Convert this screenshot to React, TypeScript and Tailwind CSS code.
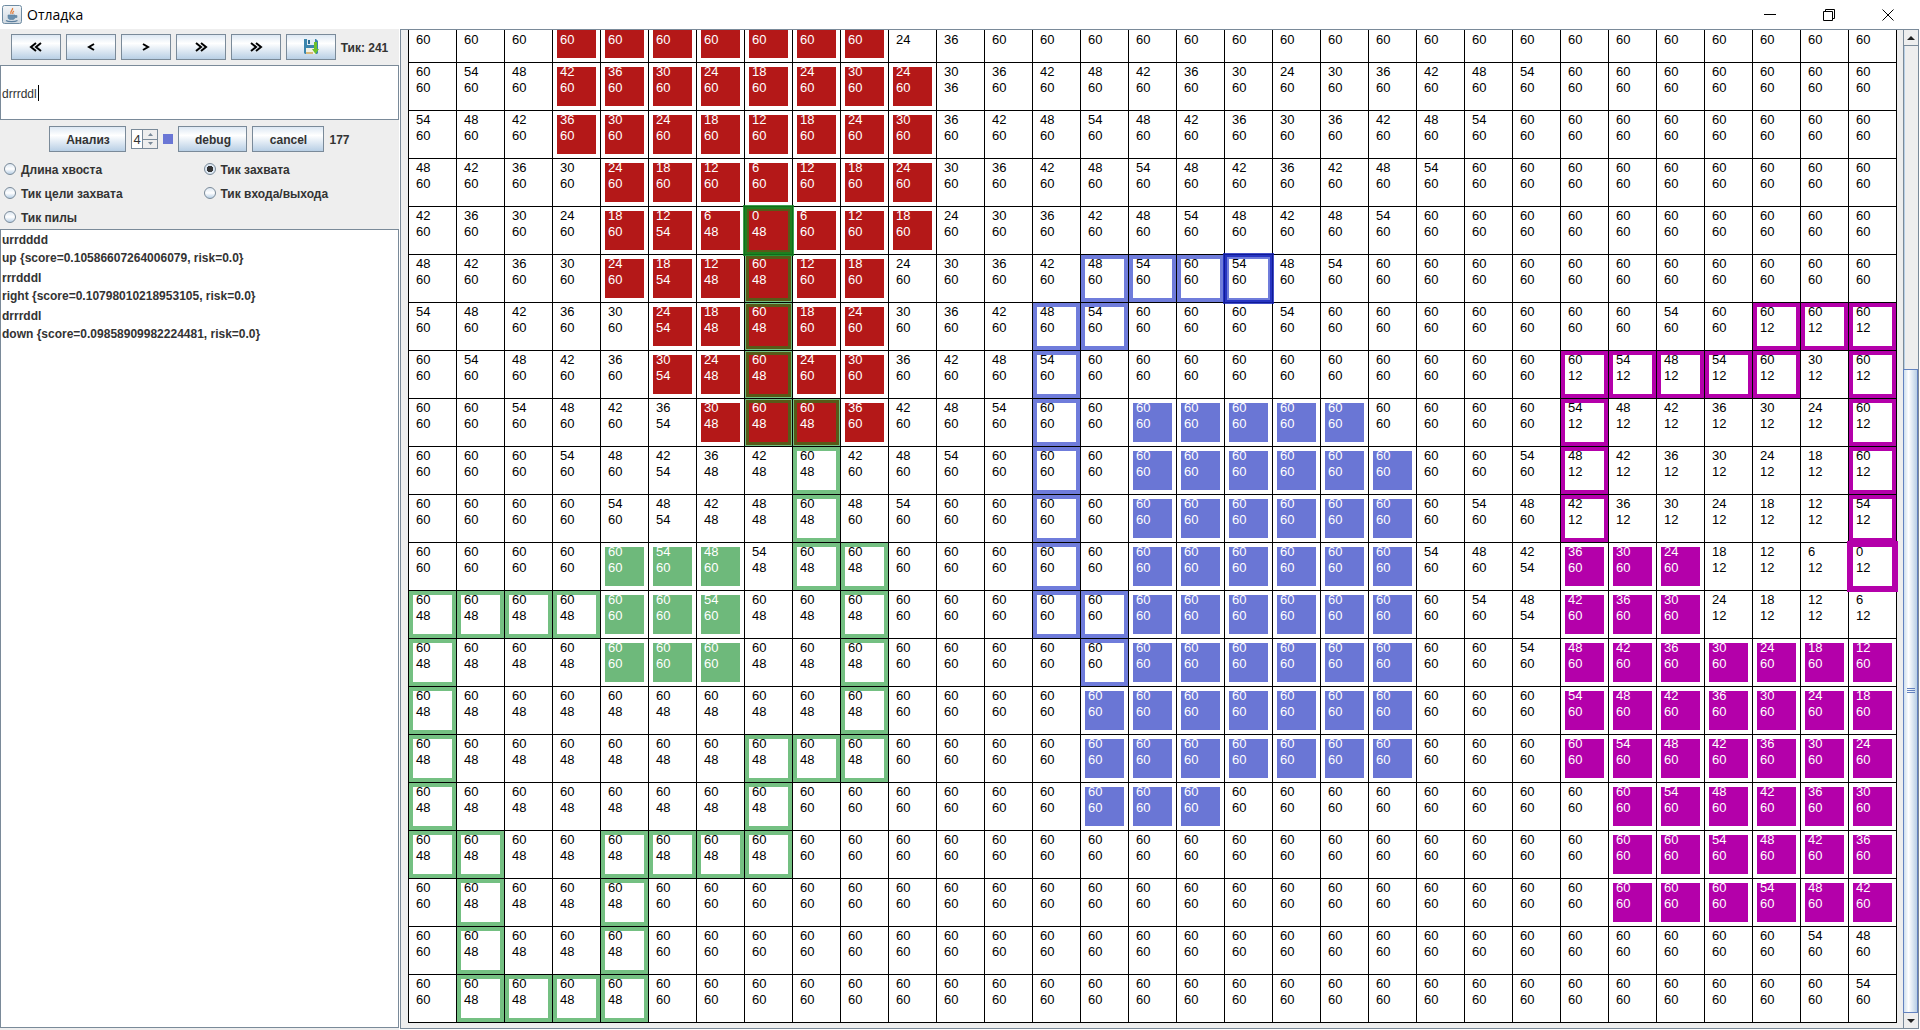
import React, { useState } from "react";

type Row = { top: string; bottom: string; kinds: string };

/* "60*4 54" stands for four cells of 60 followed by one cell of 54.
   Kinds: r g b m = captured, G B M = trail, X = trail over captured, H I J = heads. */
const ROWS: Row[] = [
  { top: "_*31", bottom: "60*10 24 36 60*19", kinds: "...rrrrrrr....................." },
  { top: "60 54 48 42 36 30 24 18 24 30 24 30 36 42 48 42 36 30 24 30 36 42 48 54 60*7", bottom: "60*11 36 60*19", kinds: "...rrrrrrrr...................." },
  { top: "54 48 42 36 30 24 18 12 18 24 30 36 42 48 54 48 42 36 30 36 42 48 54 60*8", bottom: "60*31", kinds: "...rrrrrrrr...................." },
  { top: "48 42 36 30 24 18 12 6 12 18 24 30 36 42 48 54 48 42 36 42 48 54 60*9", bottom: "60*31", kinds: "....rrrrrrr...................." },
  { top: "42 36 30 24 18 12 6 0 6 12 18 24 30 36 42 48 54 48 42 48 54 60*10", bottom: "60*5 54 48 48 60*23", kinds: "....rrrHrrr...................." },
  { top: "48 42 36 30 24 18 12 60 12 18 24 30 36 42 48 54 60 54 48 54 60*11", bottom: "60*5 54 48 48 60*23", kinds: "....rrrXrr....BBBI............." },
  { top: "54 48 42 36 30 24 18 60 18 24 30 36 42 48 54 60*3 54 60*7 54 60*4", bottom: "60*5 54 48 48 60*20 12*3", kinds: ".....rrXrr...BB.............MMM" },
  { top: "60 54 48 42 36 30 24 60 24 30 36 42 48 54 60*11 54 48 54 60 30 60", bottom: "60*5 54 48 48 60*16 12*7", kinds: ".....rrXrr...B..........MMMMM.M" },
  { top: "60 60 54 48 42 36 30 60 60 36 42 48 54 60*11 54 48 42 36 30 24 60", bottom: "60*5 54 48*3 60*15 12*7", kinds: "......rXXr...B.bbbbb....M.....M" },
  { top: "60*3 54 48 42 36 42 60 42 48 54 60*11 54 48 42 36 30 24 18 60", bottom: "60*5 54 48*3 60*15 12*7", kinds: "........G....B.bbbbbb...M.....M" },
  { top: "60*4 54 48 42 48 60 48 54 60*11 54 48 42 36 30 24 18 12 54", bottom: "60*5 54 48*3 60*15 12*7", kinds: "........G....B.bbbbbb...M.....M" },
  { top: "60*5 54 48 54 60*13 54 48 42 36 30 24 18 12 6 0", bottom: "60*7 48*3 60*13 54 60*3 12*4", kinds: "....ggg.GG...B.bbbbbb...mmm...J" },
  { top: "60*6 54 60*15 54 48 42 36 30 24 18 12 6", bottom: "48*4 60*3 48*3 60*13 54 60*3 12*4", kinds: "GGGGggg..G...BBbbbbbb...mmm...." },
  { top: "60*23 54 48 42 36 30 24 18 12", bottom: "48*4 60*3 48*3 60*21", kinds: "G...ggg..G....Bbbbbbb...mmmmmmm" },
  { top: "60*24 54 48 42 36 30 24 18", bottom: "48*10 60*21", kinds: "G........G....bbbbbbb...mmmmmmm" },
  { top: "60*25 54 48 42 36 30 24", bottom: "48*10 60*21", kinds: "G......GGG....bbbbbbb...mmmmmmm" },
  { top: "60*26 54 48 42 36 30", bottom: "48*8 60*23", kinds: "G......G......bbb........mmmmmm" },
  { top: "60*27 54 48 42 36", bottom: "48*8 60*23", kinds: "GG..GGGG.................mmmmmm" },
  { top: "60*28 54 48 42", bottom: "60 48*4 60*26", kinds: ".G..G....................mmmmmm" },
  { top: "60*29 54 48", bottom: "60 48*4 60*26", kinds: ".G..G.........................." },
  { top: "60*30 54", bottom: "60 48*4 60*26", kinds: ".GGGG.........................." },
];

function expand(line: string): string[] {
  return line.split(" ").flatMap((token) => {
    const [value, count] = token.split("*");
    return Array.from({ length: count ? Number(count) : 1 }, () => (value === "_" ? "\u00a0" : value));
  });
}

const FILLS: Record<string, string> = {
  r: "border-white bg-[#b41818] text-white",
  g: "border-white bg-[#6eb97b] text-white",
  b: "border-white bg-[#6a76d5] text-white",
  m: "border-white bg-[#b400aa] text-white",
  G: "border-[#74c082] bg-white text-black",
  B: "border-[#6f7cdb] bg-white text-black",
  M: "border-[#b400aa] bg-white text-black",
  X: "border-[#575a18] bg-[#b41818] text-white outline outline-1 -outline-offset-1 outline-[#74c082]",
  H: "border-[#575a18] bg-[#b41818] text-white",
  I: "border-[#6f7cdb] bg-white text-black",
  J: "border-[#b400aa] bg-white text-black",
  ".": "border-white bg-white text-black",
};

const HEADS: Record<string, string> = {
  H: "border-4 border-[#118a22]/80",
  I: "border-4 border-[#1422bb]/80",
  J: "border-[6px] border-[#b400aa]",
};

function Cell({ top, bottom, kind }: { top: string; bottom: string; kind: string }) {
  return (
    <td className="relative h-12 w-12 border-t border-l border-black p-0 align-top">
      <div className={"h-[47px] w-[47px] border-4 " + FILLS[kind]}>
        {HEADS[kind] && <div className={"absolute -inset-x-0.5 -inset-y-0.5 z-10 " + HEADS[kind]} />}
        <div className="relative z-20 -mt-1 pl-[3px] pt-px">
          <div>{top}</div>
          <div>{bottom}</div>
        </div>
      </div>
    </td>
  );
}

function Board() {
  return (
    <table className="shrink-0 border-separate border-spacing-0 border-r border-b border-black font-['Liberation_Sans',Arial,sans-serif] text-[13px] leading-4">
      <tbody>
        {ROWS.map((row, y) => {
          const top = expand(row.top);
          const bottom = expand(row.bottom);
          return (
            <tr key={y}>
              {row.kinds.split("").map((kind, x) => (
                <Cell key={x} top={top[x]} bottom={bottom[x]} kind={kind} />
              ))}
            </tr>
          );
        })}
      </tbody>
    </table>
  );
}

function MetalButton({ children, className = "", label }: { children: React.ReactNode; className?: string; label?: string }) {
  return (
    <button
      type="button"
      aria-label={label}
      className={
        "flex h-[26px] items-center justify-center border border-[#7a8a99] bg-linear-to-b from-[#dde8f3] via-white via-35% to-[#b8cfe5] font-bold " +
        className
      }
    >
      {children}
    </button>
  );
}

function Chevron({ d }: { d: string }) {
  return (
    <svg width="14" height="10" viewBox="0 0 14 10" fill="none" stroke="#000" strokeWidth="2" aria-hidden="true">
      <path d={d} />
    </svg>
  );
}

function SaveIcon() {
  return (
    <svg width="16" height="16" viewBox="0 0 16 16" aria-hidden="true">
      <path d="M1 0h12l2 2v12l-1 1H2l-1-1z" fill="#3c86ad" />
      <path d="M4 0h8v6H4z" fill="#e4eef5" />
      <path d="M5 1h2v4H5z" fill="#2d6f96" />
      <path d="M3 9h10v6H3z" fill="#f4f1e4" />
      <path d="M3 13h7v2H3z" fill="#d9b878" />
      <path d="M11 3h3v7h2l-3.500 5L9 10h2z" fill="#6cc22c" />
    </svg>
  );
}

function JavaIcon() {
  return (
    <svg width="20" height="20" viewBox="0 0 20 20" aria-hidden="true">
      <defs>
        <linearGradient id="cup" x1="0" y1="0" x2="0" y2="1">
          <stop offset="0" stopColor="#f4f6f8" />
          <stop offset="1" stopColor="#cfd8e0" />
        </linearGradient>
      </defs>
      <rect x="0.5" y="0.5" width="19" height="18" rx="2" fill="url(#cup)" stroke="#6f8ca3" />
      <path d="M10.500 3c1 2-3 3-1.500 6M12 6c-2 1-1.500 1.500-1 3" fill="none" stroke="#e07b39" strokeWidth="1.300" />
      <path d="M6 10h7v2c0 2-1 2.500-3.500 2.500S6 14 6 12zM13 10.500h2v2h-2" fill="#6a8fae" stroke="#5b7f9e" strokeWidth="0.600" />
      <path d="M4 15.500c2 1.500 9 1.500 11.500 0" fill="none" stroke="#5b7f9e" strokeWidth="1.200" />
    </svg>
  );
}

const MODES = ["Длина хвоста", "Тик захвата", "Тик цели захвата", "Тик входа/выхода", "Тик пилы"];

const RESULTS = [
  ["urrdddd", "up {score=0.10586607264006079, risk=0.0}"],
  ["rrrdddl", "right {score=0.10798010218953105, risk=0.0}"],
  ["drrrddl", "down {score=0.09858909982224481, risk=0.0}"],
];

function Sidebar() {
  const [mode, setMode] = useState("Тик захвата");
  const [path, setPath] = useState("drrrddl");
  const [player, setPlayer] = useState(4);
  return (
    <aside className="flex w-[399px] shrink-0 flex-col bg-[#eeeeee] text-xs font-bold text-[#333333]">
      <div className="flex h-9 items-center justify-center gap-[5px]">
        <MetalButton className="w-[50px]" label="В начало"><Chevron d="M7 1L2 5l5 4M12 1L7 5l5 4" /></MetalButton>
        <MetalButton className="w-[50px]" label="Назад"><Chevron d="M10 2L5 5l5 3" /></MetalButton>
        <MetalButton className="w-[50px]" label="Вперёд"><Chevron d="M4 2l5 3-5 3" /></MetalButton>
        <MetalButton className="w-[50px]" label="Быстро вперёд"><Chevron d="M2 1l5 4-5 4M7 1l5 4-5 4" /></MetalButton>
        <MetalButton className="w-[50px]" label="В конец"><Chevron d="M2 1l5 4-5 4M7 1l5 4-5 4" /></MetalButton>
        <MetalButton className="w-[50px]" label="Сохранить"><SaveIcon /></MetalButton>
        <span className="pt-0.5">Тик: 241</span>
      </div>

      <div className="relative h-14">
        <input
          aria-label="Путь"
          value={path}
          onChange={(e) => setPath(e.target.value)}
          className="h-[55px] w-full border border-[#7a8a99] bg-white px-px pt-0.5 font-normal outline-none"
        />
        <span className="absolute top-5 left-[38px] h-4 w-px bg-black" />
      </div>

      <div className="flex h-9 items-center justify-center gap-[5px]">
        <MetalButton className="w-[77px] pt-0.5">Анализ</MetalButton>
        <div className="flex h-5 border border-[#7a8a99] bg-white font-normal">
          <input
            aria-label="Игрок"
            inputMode="numeric"
            value={player}
            onChange={(e) => setPlayer(Number(e.target.value) || 0)}
            className="w-2.5 pt-0.5 pl-px text-[13px] text-[#333333] outline-none"
          />
          <div className="flex w-[15px] flex-col divide-y divide-[#7a8a99] border-l border-[#7a8a99] bg-[#eeeeee]">
            <button type="button" aria-label="Больше" onClick={() => setPlayer(player + 1)} className="flex flex-1 items-center justify-center">
              <svg width="5" height="3" viewBox="0 0 5 3" aria-hidden="true"><path d="M0 3l2.500-3L5 3z" fill="#7a8a99" /></svg>
            </button>
            <button type="button" aria-label="Меньше" onClick={() => setPlayer(player - 1)} className="flex flex-1 items-center justify-center">
              <svg width="5" height="3" viewBox="0 0 5 3" aria-hidden="true"><path d="M0 0l2.500 3L5 0z" fill="#7a8a99" /></svg>
            </button>
          </div>
        </div>
        <span className="size-2.5 bg-[#6a76d5]" />
        <MetalButton className="w-[69px] pt-0.5">debug</MetalButton>
        <MetalButton className="w-[72px] pt-0.5">cancel</MetalButton>
        <span className="pt-0.5">177</span>
      </div>

      <div className="grid grid-cols-2">
        {MODES.map((name) => (
          <label key={name} className="flex h-6 items-center gap-[5px] pl-1">
            <input
              type="radio"
              name="mode"
              checked={mode === name}
              onChange={() => setMode(name)}
              className="size-3 appearance-none rounded-full border border-[#7a8a99] bg-linear-to-b from-[#dde8f3] via-white to-[#b8cfe5] checked:bg-[radial-gradient(circle,#333_3px,#dde8f3_3.5px)]"
            />
            <span className="pt-0.5">{name}</span>
          </label>
        ))}
      </div>

      <ul className="mb-0.5 flex-1 border border-[#7a8a99] bg-white pt-px pl-px leading-[18px]">
        {RESULTS.map(([moves, score]) => (
          <li key={moves} className="pb-0.5">
            <div>{moves}</div>
            <div>{score}</div>
          </li>
        ))}
      </ul>
    </aside>
  );
}

function ScrollBar() {
  return (
    <div className="flex w-[15px] shrink-0 flex-col border-l border-[#7a8a99] bg-[#eeeeee]">
      <button type="button" aria-label="Прокрутить вверх" className="flex h-4 items-center justify-center border-b border-[#7a8a99]">
        <svg width="8" height="4" viewBox="0 0 8 4" aria-hidden="true"><path d="M0 4l4-4 4 4z" fill="#222" /></svg>
      </button>
      <div className="flex-[323] border-l border-[#b8cfe5]" />
      <div className="-ml-px flex flex-[643] flex-col items-center justify-center gap-px border border-[#6382bf] bg-linear-to-r from-[#cfdfee] via-white via-35% to-[#b8cfe5]">
        <span className="h-px w-2 bg-[#6382bf]" />
        <span className="h-px w-2 bg-[#6382bf]" />
        <span className="h-px w-2 bg-[#6382bf]" />
      </div>
      <button type="button" aria-label="Прокрутить вниз" className="flex h-[15px] items-center justify-center">
        <svg width="8" height="4" viewBox="0 0 8 4" aria-hidden="true"><path d="M0 0l4 4 4-4z" fill="#222" /></svg>
      </button>
    </div>
  );
}

export default function App() {
  return (
    <div className="flex h-screen flex-col overflow-hidden bg-white font-['Liberation_Sans',Arial,sans-serif]">
      <header className="flex h-[29px] shrink-0 items-center bg-white pl-0.5 text-black">
        <JavaIcon />
        <h1 className="flex-1 pl-[5px] font-['Open_Sans','Noto_Sans',sans-serif] text-sm leading-5">Отладка</h1>
        <div className="flex pr-6">
          <button type="button" aria-label="Свернуть" className="flex w-[59px] justify-end pr-0.5">
            <svg width="12" height="12" viewBox="0 0 12 12" stroke="#000" aria-hidden="true"><path d="M0 5.500h12" /></svg>
          </button>
          <button type="button" aria-label="Восстановить" className="flex w-[59px] justify-end pr-0.5">
            <svg width="12" height="12" viewBox="0 0 12 12" fill="none" stroke="#000" aria-hidden="true"><path d="M.5 2.500h9v9h-9zM2.500 2.500v-2h9v9h-2" /></svg>
          </button>
          <button type="button" aria-label="Закрыть" className="flex w-[59px] justify-end pr-0.5">
            <svg width="12" height="12" viewBox="0 0 12 12" stroke="#000" aria-hidden="true"><path d="M.5.5l11 11M11.500.5l-11 11" /></svg>
          </button>
        </div>
      </header>
      <div className="flex min-h-0 flex-1">
        <Sidebar />
        <main className="mr-px mb-px ml-px flex min-w-0 flex-1 border border-[#7a8a99] bg-[#eeeeee]">
          <div className="flex min-w-0 flex-1 flex-col items-start justify-end overflow-hidden pb-[5px] pl-[7px]">
            <Board />
          </div>
          <ScrollBar />
        </main>
      </div>
    </div>
  );
}
